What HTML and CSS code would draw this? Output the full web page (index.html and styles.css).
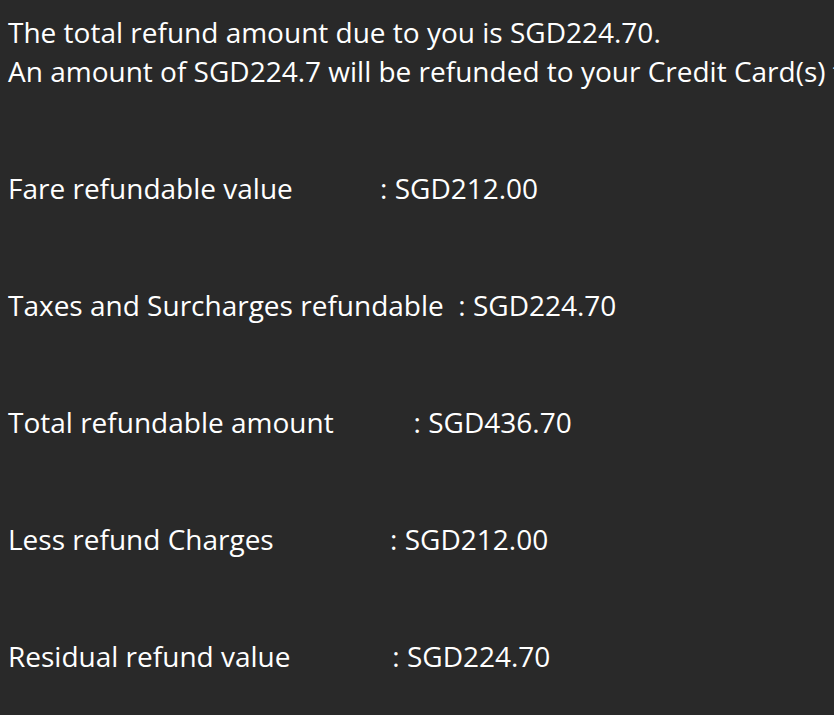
FILE: index.html
```html
<!DOCTYPE html>
<html>
<head>
    <meta charset="UTF-8">
    <meta name="viewport" content="width=device-width, initial-scale=1.0">
    <title>Refund summary</title>
    <link rel="stylesheet" href="styles.css">
</head>
<body>
<div id="refundSummary">
    <p class="line">The total refund amount due to you is SGD224.70.</p>
    <p class="line">An amount of SGD224.7 will be refunded to your Credit Card(s) to which the original payment was made.</p>
    <p class="row">Fare refundable value            : SGD212.00</p>
    <p class="row">Taxes and Surcharges refundable  : SGD224.70</p>
    <p class="row">Total refundable amount           : SGD436.70</p>
    <p class="row">Less refund Charges                : SGD212.00</p>
    <p class="row">Residual refund value              : SGD224.70</p>
</div>
</body>
</html>
```

FILE: styles.css
```css
html, body {
    margin: 0;
    background-color: #292929;
}
body {
    font-family: "Segoe UI", "Open Sans", sans-serif;
    color: #fff;
    font-size: 28px;
    line-height: 39px;
    overflow: hidden;
}
#refundSummary {
    padding: 13px 8px;
    overflow: hidden;
}
#refundSummary p {
    margin: 0;
    white-space: pre;
}
#refundSummary .row {
    margin-top: 78px;
}
```
